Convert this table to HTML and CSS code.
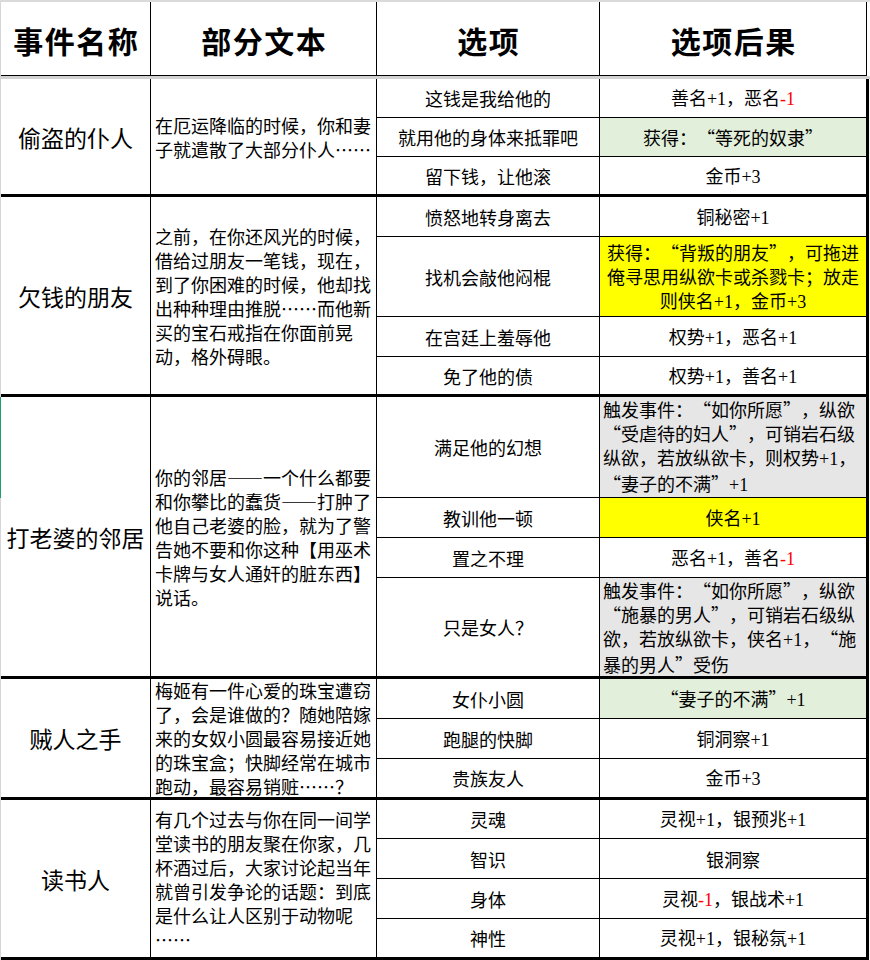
FILE: index.html
```html
<!DOCTYPE html>
<html lang="zh-CN">
<head>
<meta charset="utf-8">
<title>事件选项表</title>
<link rel="stylesheet" href="styles.css">
</head>
<body>
<div class="sheet">
  <div class="top-line"></div>
  <table class="grid head">
    <colgroup><col class="c0"><col class="c1"><col class="c2"><col class="c3"><col class="c4h"></colgroup>
    <tr class="hrow">
      <td class="rh"></td><th>事件名称</th><th>部分文本</th><th>选项</th><th>选项后果</th>
    </tr>
  </table>
  <div class="freeze"></div>
  <table class="grid body">
    <colgroup><col class="c0"><col class="c1"><col class="c2"><col class="c3"><col class="c4"></colgroup>
    <tbody>
      <tr class="h39">
        <td class="rh"></td>
        <td class="ev" rowspan="3">偷盗的仆人</td>
        <td class="txt" rowspan="3">在厄运降临的时候，你和妻<br>子就遣散了大部分仆人……</td>
        <td class="opt">这钱是我给他的</td>
        <td class="res">善名<span class="n">+1</span>，恶名<span class="n neg">-1</span></td>
      </tr>
      <tr class="h39">
        <td class="rh"></td>
        <td class="opt">就用他的身体来抵罪吧</td>
        <td class="res green">获得：<span class="ql">“</span>等死的奴隶<span class="qr">”</span></td>
      </tr>
      <tr class="h40 gend">
        <td class="rh"></td>
        <td class="opt">留下钱，让他滚</td>
        <td class="res">金币<span class="n">+3</span></td>
      </tr>

      <tr class="h40">
        <td class="rh"></td>
        <td class="ev" rowspan="4">欠钱的朋友</td>
        <td class="txt" rowspan="4">之前，在你还风光的时候，<br>借给过朋友一笔钱，现在，<br>到了你困难的时候，他却找<br>出种种理由推脱……而他新<br>买的宝石戒指在你面前晃<br>动，格外碍眼。</td>
        <td class="opt">愤怒地转身离去</td>
        <td class="res">铜秘密<span class="n">+1</span></td>
      </tr>
      <tr class="h80">
        <td class="rh"></td>
        <td class="opt">找机会敲他闷棍</td>
        <td class="res yellow">获得：<span class="ql">“</span>背叛的朋友<span class="qr">”</span>，可拖进<br>俺寻思用纵欲卡或杀戮卡；放走<br>则侠名<span class="n">+1</span>，金币<span class="n">+3</span></td>
      </tr>
      <tr class="h40">
        <td class="rh"></td>
        <td class="opt">在宫廷上羞辱他</td>
        <td class="res">权势<span class="n">+1</span>，恶名<span class="n">+1</span></td>
      </tr>
      <tr class="h40 gend">
        <td class="rh"></td>
        <td class="opt">免了他的债</td>
        <td class="res">权势<span class="n">+1</span>，善名<span class="n">+1</span></td>
      </tr>

      <tr class="h100">
        <td class="rh sel"></td>
        <td class="ev" rowspan="4">打老婆的邻居</td>
        <td class="txt" rowspan="4">你的邻居——一个什么都要<br>和你攀比的蠢货——打肿了<br>他自己老婆的脸，就为了警<br>告她不要和你这种【用巫术<br>卡牌与女人通奸的脏东西】<br>说话。</td>
        <td class="opt">满足他的幻想</td>
        <td class="res gray left">触发事件：<span class="ql">“</span>如你所愿<span class="qr">”</span>，纵欲<br><span class="ql">“</span>受虐待的妇人<span class="qr">”</span>，可销岩石级<br>纵欲，若放纵欲卡，则权势<span class="n">+1</span>，<br><span class="ql">“</span>妻子的不满<span class="qr">”</span><span class="n">+1</span></td>
      </tr>
      <tr class="h40">
        <td class="rh"></td>
        <td class="opt">教训他一顿</td>
        <td class="res yellow">侠名<span class="n">+1</span></td>
      </tr>
      <tr class="h40">
        <td class="rh"></td>
        <td class="opt">置之不理</td>
        <td class="res">恶名<span class="n">+1</span>，善名<span class="n neg">-1</span></td>
      </tr>
      <tr class="h101 gend">
        <td class="rh"></td>
        <td class="opt">只是女人？</td>
        <td class="res gray left">触发事件：<span class="ql">“</span>如你所愿<span class="qr">”</span>，纵欲<br><span class="ql">“</span>施暴的男人<span class="qr">”</span>，可销岩石级纵<br>欲，若放纵欲卡，侠名<span class="n">+1</span>，<span class="ql">“</span>施<br>暴的男人<span class="qr">”</span>受伤</td>
      </tr>

      <tr class="h40">
        <td class="rh"></td>
        <td class="ev" rowspan="3">贼人之手</td>
        <td class="txt" rowspan="3"><div class="tight">梅姬有一件心爱的珠宝遭窃<br>了，会是谁做的？随她陪嫁<br>来的女奴小圆最容易接近她<br>的珠宝盒；快脚经常在城市<br>跑动，最容易销赃……？</div></td>
        <td class="opt">女仆小圆</td>
        <td class="res green"><span class="ql">“</span>妻子的不满<span class="qr">”</span><span class="n">+1</span></td>
      </tr>
      <tr class="h40">
        <td class="rh"></td>
        <td class="opt">跑腿的快脚</td>
        <td class="res">铜洞察<span class="n">+1</span></td>
      </tr>
      <tr class="h41 gend">
        <td class="rh"></td>
        <td class="opt">贵族友人</td>
        <td class="res">金币<span class="n">+3</span></td>
      </tr>

      <tr class="h39">
        <td class="rh"></td>
        <td class="ev" rowspan="4">读书人</td>
        <td class="txt" rowspan="4">有几个过去与你在同一间学<br>堂读书的朋友聚在你家，几<br>杯酒过后，大家讨论起当年<br>就曾引发争论的话题：到底<br>是什么让人区别于动物呢<br>……</td>
        <td class="opt">灵魂</td>
        <td class="res">灵视<span class="n">+1</span>，银预兆<span class="n">+1</span></td>
      </tr>
      <tr class="h40">
        <td class="rh"></td>
        <td class="opt">智识</td>
        <td class="res">银洞察</td>
      </tr>
      <tr class="h40">
        <td class="rh"></td>
        <td class="opt">身体</td>
        <td class="res">灵视<span class="n neg">-1</span>，银战术<span class="n">+1</span></td>
      </tr>
      <tr class="h41 gend">
        <td class="rh"></td>
        <td class="opt">神性</td>
        <td class="res">灵视<span class="n">+1</span>，银秘氛<span class="n">+1</span></td>
      </tr>

      <tr class="h40">
        <td class="rh"></td>
        <td class="ev"></td>
        <td class="txt"></td>
        <td class="opt"></td>
        <td class="res gray"></td>
      </tr>
    </tbody>
  </table>
</div>
</body>
</html>
```

FILE: styles.css
```css
* {
  box-sizing: border-box;
}

html,
body {
  margin: 0;
  padding: 0;
  background: #ffffff;
}

body {
  font-family: "Noto Sans CJK SC", "Noto Sans CJK JP", sans-serif;
  font-size: 18px;
  color: #000000;
}

.sheet {
  width: 870px;
  height: 960px;
  overflow: hidden;
}

.top-line {
  height: 2px;
  background: #dadada;
}

.freeze {
  height: 3px;
  background: #d2d2d2;
}

.grid {
  border-collapse: separate;
  border-spacing: 0;
  table-layout: fixed;
}

.head {
  width: 867px;
}

.body {
  width: 869px;
}

col.c0 { width: 1px; }
col.c1 { width: 150px; }
col.c2 { width: 226px; }
col.c3 { width: 223px; }
col.c4 { width: 269px; }
col.c4h { width: 267px; }

td,
th {
  padding: 0;
  border: 0;
  border-right: 1px solid #000000;
  border-bottom: 1px solid #000000;
  vertical-align: middle;
  font-weight: 400;
  line-height: 24px;
}

td.rh {
  border: 0;
  background: #d6d6d6;
}

td.rh.sel {
  background: #1f9d6c;
}

.hrow {
  height: 74px;
}

th {
  font-size: 30px;
  font-weight: 600;
  letter-spacing: 1.5px;
  text-indent: 1.5px;
  text-align: center;
  line-height: 40px;
  padding-top: 3px;
}

.h39 { height: 39px; }
.h40 { height: 40px; }
.h41 { height: 41px; }
.h80 { height: 80px; }
.h100 { height: 100px; }
.h101 { height: 101px; }

.ev {
  font-size: 23px;
  text-align: center;
  border-bottom-width: 3px;
}

.txt {
  text-align: left;
  padding: 0 3px 0 4px;
  border-bottom-width: 3px;
}

.tight {
  margin: -2px 0;
}

.opt {
  text-align: center;
}

.res {
  text-align: center;
  padding: 0 3px;
  border-right-width: 3px;
}

.res.left {
  text-align: left;
}

.gend td.opt,
.gend td.res {
  border-bottom-width: 3px;
}

.yellow {
  background: #ffff00;
}

.green {
  background: #e2efda;
}

.gray {
  background: #e7e6e6;
}

.ql,
.qr {
  display: inline-block;
  width: 1em;
}

.ql {
  text-align: right;
}

.qr {
  text-align: left;
}

.n {
  font-family: "Liberation Serif", serif;
}

.neg {
  color: #ff0000;
}
```
